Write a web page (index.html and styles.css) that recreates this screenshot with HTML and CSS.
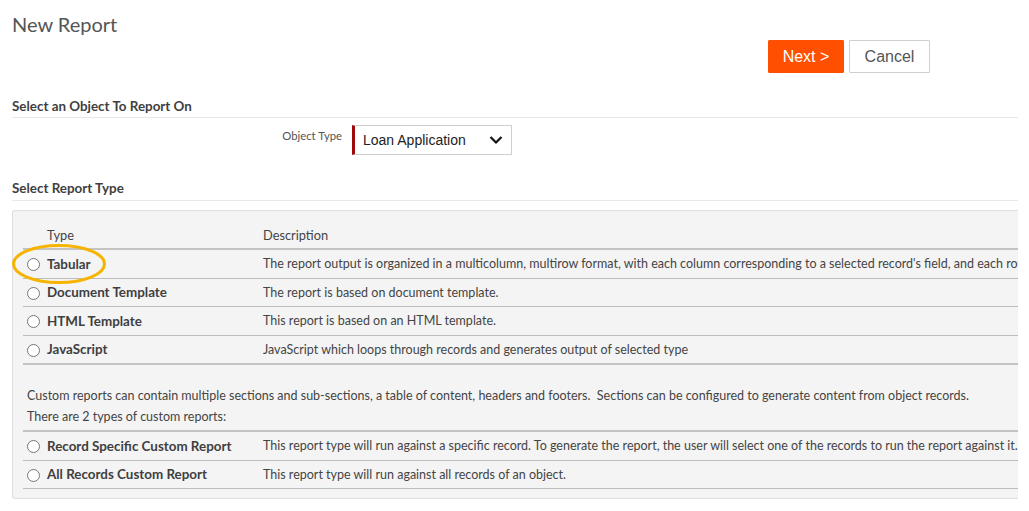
FILE: index.html
```html
<!DOCTYPE html>
<html>
<head>
<meta charset="utf-8">
<link rel="stylesheet" href="styles.css">
</head>
<body>
<div class="page">
  <h1 class="title">New Report</h1>
  <div class="actions">
    <button class="btn btn-next">Next &gt;</button>
    <button class="btn btn-cancel">Cancel</button>
  </div>

  <h2 class="section-head first">Select an Object To Report On</h2>
  <div class="field-row">
    <label class="field-label">Object Type</label>
    <div class="select">
      <span class="select-value">Loan Application</span>
      <svg class="chev" width="14" height="10" viewBox="0 0 14 10"><path d="M1.5 2 L7 7.5 L12.5 2" fill="none" stroke="#111" stroke-width="2.2"/></svg>
    </div>
  </div>

  <h2 class="section-head second">Select Report Type</h2>
  <div class="panel-wrap">
    <div class="panel">
      <table class="types">
        <colgroup><col class="col-type"><col class="col-desc"></colgroup>
        <thead>
          <tr><th class="c-type">Type</th><th class="c-desc">Description</th></tr>
        </thead>
        <tbody>
          <tr><td><div class="cell type"><input type="radio" name="t"><span>Tabular</span></div></td><td><div class="cell desc">The report output is organized in a multicolumn, multirow format, with each column corresponding to a selected record's field, and each row representing a record.</div></td></tr>
          <tr><td><div class="cell type"><input type="radio" name="t"><span>Document Template</span></div></td><td><div class="cell desc">The report is based on document template.</div></td></tr>
          <tr><td><div class="cell type"><input type="radio" name="t"><span>HTML Template</span></div></td><td><div class="cell desc">This report is based on an HTML template.</div></td></tr>
          <tr class="last"><td><div class="cell type"><input type="radio" name="t"><span>JavaScript</span></div></td><td><div class="cell desc">JavaScript which loops through records and generates output of selected type</div></td></tr>
        </tbody>
      </table>
      <p class="custom-note">Custom reports can contain multiple sections and sub-sections, a table of content, headers and footers.&nbsp; Sections can be configured to generate content from object records.<br>There are 2 types of custom reports:</p>
      <table class="types custom">
        <colgroup><col class="col-type"><col class="col-desc"></colgroup>
        <tbody>
          <tr><td><div class="cell type"><input type="radio" name="t"><span>Record Specific Custom Report</span></div></td><td><div class="cell desc">This report type will run against a specific record. To generate the report, the user will select one of the records to run the report against it.</div></td></tr>
          <tr><td><div class="cell type"><input type="radio" name="t"><span>All Records Custom Report</span></div></td><td><div class="cell desc">This report type will run against all records of an object.</div></td></tr>
        </tbody>
      </table>
    </div>
    <svg class="highlight" width="98" height="44" viewBox="0 0 98 44"><ellipse cx="49" cy="22" rx="45.5" ry="18.5" fill="none" stroke="#f6b400" stroke-width="3"/></svg>
  </div>
</div>
</body>
</html>
```

FILE: styles.css
```css
html, body {
  margin: 0;
  padding: 0;
  background: #fff;
}
body {
  font-family: Lato, "Open Sans", sans-serif;
  color: #444;
}
.page {
  padding: 0 11px 0 12px;
  overflow: hidden;
}
.title {
  margin: 12px 0 0 0;
  font-size: 20px;
  line-height: 24px;
  font-weight: 400;
  color: #555;
}
.actions {
  display: flex;
  justify-content: flex-end;
  gap: 5px;
  margin-top: 4px;
  padding-right: 88px;
}
.btn {
  font-family: "Liberation Sans", Arial, sans-serif;
  font-size: 16px;
  height: 33px;
  border-radius: 1px;
  cursor: pointer;
  padding: 0;
}
.btn-next {
  width: 76px;
  background: #fe5000;
  border: 1px solid #fe5000;
  color: #fff;
}
.btn-cancel {
  width: 81px;
  background: #fff;
  border: 1px solid #cfcfcf;
  color: #555;
}
.section-head {
  margin: 0;
  font-size: 13.4px;
  line-height: 16px;
  font-weight: 700;
  color: #3f3f3f;
  padding-bottom: 4px;
  border-bottom: 1px solid #e8e8e8;
}
.section-head.first {
  margin-top: 24px;
  padding-top: 1px;
  padding-bottom: 3px;
}
.section-head.second {
  margin-top: 25px;
}
.field-row {
  display: grid;
  grid-template-columns: 330px 160px;
  column-gap: 10px;
  margin-top: 7px;
}
.field-label {
  text-align: right;
  font-size: 11.3px;
  line-height: 14px;
  padding-top: 4px;
  color: #555;
}
.select {
  height: 30px;
  box-sizing: border-box;
  border: 1px solid #cfcfcf;
  border-left: 3px solid #9e0a0a;
  background: #fff;
  display: flex;
  align-items: center;
  justify-content: space-between;
  padding: 0 8px 0 8px;
  font-family: "Liberation Sans", Arial, sans-serif;
  font-size: 14px;
  color: #222;
}
.chev {
  display: block;
}
.panel-wrap {
  position: relative;
  margin-top: 9px;
}
.panel {
  background: #f4f4f4;
  border: 1px solid #dedede;
  border-right: none;
  border-radius: 3px 0 0 3px;
  padding: 11px 0 9px 10px;
  overflow: hidden;
}
.types {
  border-collapse: collapse;
  table-layout: fixed;
  width: 1500px;
  color: #444;
}
.col-type {
  width: 240px;
}
.types th {
  font-weight: 400;
  font-size: 12.8px;
  text-align: left;
  line-height: 16px;
  padding: 5px 0 5px 0;
  border-bottom: 2px solid #c4c4c4;
}
.types th.c-type {
  padding-left: 24px;
}
.types td {
  padding: 0;
  border-bottom: 1px solid #bcbcbc;
}
.types tr.last td {
  border-bottom: 2px solid #c4c4c4;
}
.cell {
  height: 27.5px;
  display: flex;
  align-items: center;
  white-space: nowrap;
}
.cell.type {
  padding-left: 4px;
  font-weight: 700;
  font-size: 13.4px;
  color: #3f3f3f;
}
.cell.desc {
  font-size: 12.5px;
}
.cell input[type="radio"] {
  margin: 2px 7px 0 0;
  width: 13px;
  height: 13px;
  flex: none;
}
.custom-note {
  margin: 20px 0 3px 4px;
  font-size: 12.5px;
  line-height: 21px;
  color: #444;
  white-space: nowrap;
}
.custom {
  border-top: 2px solid #c4c4c4;
}
.highlight {
  position: absolute;
  left: -2px;
  top: 32px;
}
```
